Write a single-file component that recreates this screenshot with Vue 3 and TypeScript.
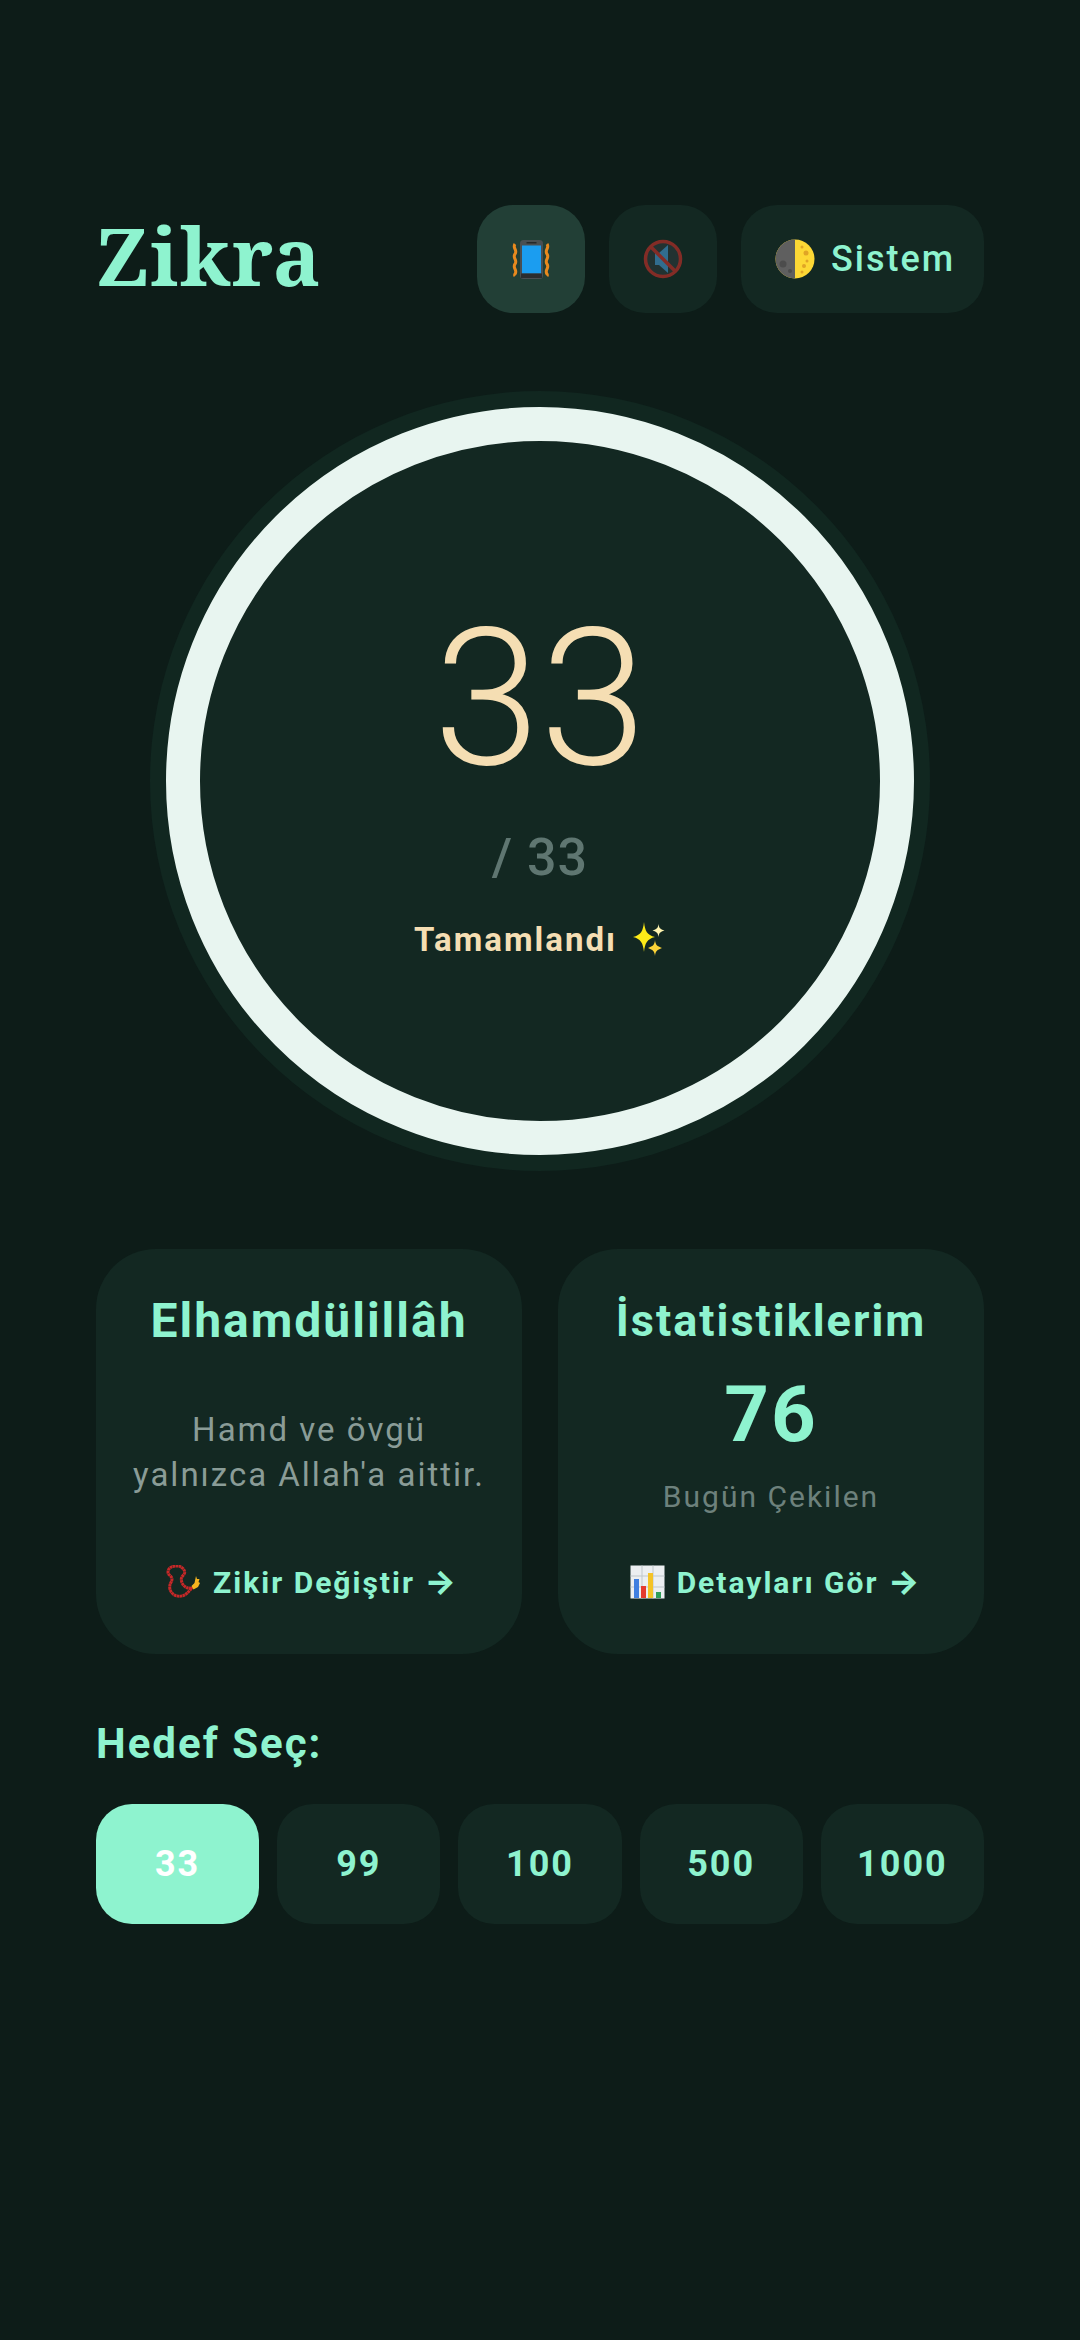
<script setup lang="ts">
const targets: number[] = [33, 99, 100, 500, 1000]
</script>

<template>
  <main class="page">
    <header class="top">
      <h1 class="logo">Zikra</h1>
      <div class="actions">
        <button class="act act-on">
          <svg width="64" height="64" viewBox="0 0 64 64">
            <path d="M16 17c-3 4 3 6 0 10s3 6 0 10 3 6 0 10c-.5 1-.5 1.500 0 2M48 17c3 4-3 6 0 10s-3 6 0 10-3 6 0 10c.5 1 .5 1.500 0 2" fill="none" stroke="#e8891e" stroke-width="3"/>
            <rect x="21" y="13" width="23" height="39" rx="3.500" fill="#4a4f52"/>
            <rect x="23" y="18.500" width="19" height="28" fill="#1b9df0"/>
            <rect x="27.500" y="15" width="10" height="1.500" fill="#25282a"/>
            <rect x="22" y="46.500" width="21" height="4.500" fill="#2b2d2f"/>
          </svg>
        </button>
        <button class="act">
          <svg class="dim" width="64" height="64" viewBox="0 0 64 64">
            <circle cx="32" cy="32" r="17" fill="#2f3b3e"/>
            <path d="M24 26h4l9-8v28l-9-8h-4z" fill="#4aa7e8"/>
            <circle cx="32" cy="32" r="17.500" fill="none" stroke="#e0312b" stroke-width="3.500"/>
            <path d="M20 20l24 24" stroke="#e0312b" stroke-width="3.500"/>
          </svg>
        </button>
        <button class="act act-wide">
          <svg width="40" height="40" viewBox="0 0 40 40">
            <circle cx="20" cy="20" r="19.500" fill="#fdd835"/>
            <path d="M20 .5a19.500 19.500 0 0 0 0 39z" fill="#5f5f5f"/>
            <circle cx="27" cy="8" r="1.500" fill="#e0a526"/>
            <circle cx="31" cy="14" r="2.500" fill="#e0a526"/>
            <circle cx="32" cy="22" r="1.500" fill="#e0a526"/>
            <circle cx="29" cy="27" r="2" fill="#e0a526"/>
            <circle cx="27" cy="33" r="1.500" fill="#e0a526"/>
            <circle cx="8" cy="25" r="3.500" fill="#4c4c4c"/>
            <circle cx="15" cy="32" r="2" fill="#4c4c4c"/>
          </svg>
          <span>Sistem</span>
        </button>
      </div>
    </header>

    <section class="dial">
      <div class="ring">
        <div class="face">
          <div class="count">33</div>
          <div class="goal">/ 33</div>
          <div class="done">
            <span>Tamamlandı</span>
            <svg width="34" height="36" viewBox="0 0 34 36">
              <path d="M12 0c1 9 3 13 11 15-8 2-10 6-11 15-1-9-3-13-11-15 8-2 10-6 11-15z" fill="#fdeb18"/>
              <path d="M26.500 2c.5 4 1.500 5 6 6.500-4.500 1.500-5.500 2.500-6 6.500-.5-4-1.500-5-6-6.500 4.500-1.500 5.500-2.500 6-6.500z" fill="#fff4b0"/>
              <path d="M23 18c.5 5 2 6 7 8-5 2-6.500 3-7 8-.5-5-2-6-7-8 5-2 6.500-3 7-8z" fill="#fbd338"/>
            </svg>
          </div>
        </div>
      </div>
    </section>

    <section class="cards">
      <article class="card">
        <h2>Elhamdülillâh</h2>
        <p class="meaning">Hamd ve övgü<br />yalnızca Allah'a aittir.</p>
        <div class="link link-a">
          <svg width="35" height="34" viewBox="0 0 35 34">
            <path d="M25.300 23.300C22 28 18 31.300 13.700 31.300 8 31.300 3.700 27 3.700 22.300 3.700 18 6 17 6 14 6 11 2 10 2 7.300 2 3 6 .9 10.300.9 15 .9 18.700 4 18.700 7.300 18.700 10 15.300 11 15.300 14 15.300 19 18.700 22.300 22 23z" fill="none" stroke="#c62828" stroke-width="3" stroke-dasharray="2.600 .4"/>
            <path d="M30 11l1 3 2.500 0-1 3 1.500 1-2 4-4.500 2.500-2-3.500 3-3z" fill="#f5b51f"/>
          </svg>
          <span>Zikir Değiştir <span class="arrow">→</span></span>
        </div>
      </article>
      <article class="card">
        <h2 class="h2-small">İstatistiklerim</h2>
        <div class="today">76</div>
        <p class="today-label">Bugün Çekilen</p>
        <div class="link link-b">
          <svg width="35" height="34" viewBox="0 0 35 34">
            <rect x=".5" y=".5" width="34" height="33" fill="#eceff1"/>
            <path d="M.5 11h34M.5 22h34M12 .5v33M23 .5v33" stroke="#bfc7cb" stroke-width="1"/>
            <rect x="4" y="14" width="5" height="19" fill="#3f7fe0"/>
            <rect x="11" y="21" width="5" height="12" fill="#e53a2f"/>
            <rect x="18" y="8" width="5" height="25" fill="#f4c326"/>
            <rect x="26" y="27" width="5" height="6" fill="#2f9e58"/>
          </svg>
          <span>Detayları Gör <span class="arrow">→</span></span>
        </div>
      </article>
    </section>

    <section class="pick">
      <h3>Hedef Seç:</h3>
      <div class="targets">
        <button v-for="(t, i) in targets" :key="t" class="target" :class="{ 'target-on': i === 0 }">{{ t }}</button>
      </div>
    </section>
  </main>
</template>

<style>
html, body { background: #0d1c18; }
</style>

<style scoped>
.page {
  box-sizing: border-box;
  width: 1080px;
  height: 2340px;
  padding: 205px 96px 0;
  background: #0d1c18;
  font-family: Roboto, "Noto Sans", sans-serif;
  color: #8ef3cf;
  overflow: hidden;
}
.top { display: flex; justify-content: space-between; align-items: center; height: 108px; }
.logo { margin: 0 0 8px; font-family: "Noto Serif", "DejaVu Serif Condensed", "DejaVu Serif", serif; font-size: 80px; font-weight: 700; line-height: 108px; letter-spacing: 1px; }
.actions { display: flex; gap: 24px; }
.act {
  display: flex; align-items: center; justify-content: center; gap: 16px;
  width: 108px; height: 108px; padding: 0; border: 0; border-radius: 36px;
  background: #132822; color: inherit; font-family: inherit;
}
.act-on { background: #223f36; }
.act-wide { width: 243px; justify-content: flex-start; padding-left: 34px; font-size: 36px; letter-spacing: 2px; font-weight: 500; }
.dim { opacity: .55; }

.dial { display: flex; justify-content: center; margin-top: 78px; }
.ring {
  box-sizing: border-box; width: 780px; height: 780px; padding: 16px;
  border-radius: 50%; background: #112720;
}
.face {
  box-sizing: border-box; width: 748px; height: 748px; border: 34px solid #e8f5f0;
  border-radius: 50%; background: #132822;
  display: flex; flex-direction: column; align-items: center; padding-top: 162px;
}
.count { font-size: 192px; font-weight: 300; line-height: 192px; color: #f5deb3; }
.goal { margin-top: 31px; font-size: 52px; font-weight: 500; line-height: 64px; letter-spacing: 1px; color: #5f7671; }
.done { display: flex; align-items: center; gap: 15px; margin-top: 26px; font-size: 33px; font-weight: 700; line-height: 48px; letter-spacing: 2px; color: #f5deb3; }

.cards { display: grid; grid-template-columns: 1fr 1fr; gap: 36px; margin-top: 78px; }
.card {
  box-sizing: border-box; height: 405px; border-radius: 60px; background: #132822;
  display: flex; flex-direction: column; align-items: center; padding: 44px 24px 0; text-align: center; position: relative;
}
.card h2 { margin: 0; font-size: 48px; font-weight: 700; line-height: 56px; letter-spacing: 2px; white-space: nowrap; }
.card .h2-small { font-size: 45px; }
.meaning { margin: 58px 0 0; font-size: 33px; line-height: 45px; letter-spacing: 2px; color: #8a9c97; white-space: nowrap; }
.today { margin-top: 24px; font-size: 78px; font-weight: 700; line-height: 84px; letter-spacing: 2px; }
.today-label { margin: 20px 0 0; font-size: 30px; line-height: 40px; letter-spacing: 2px; color: #6d817c; }
.link { position: absolute; left: 0; right: 0; top: 312px; display: flex; justify-content: center; align-items: center; gap: 12px; font-size: 30px; font-weight: 700; line-height: 40px; letter-spacing: 2px; }
.link-a { padding-left: 6px; }
.link-b { padding-left: 9px; }
.arrow { font-family: Inter, "Noto Sans", sans-serif; font-size: 33px; font-weight: 800; }

.pick { margin-top: 65px; }
.pick h3 { margin: 0; font-size: 42px; font-weight: 700; line-height: 50px; letter-spacing: 2px; }
.targets { display: grid; grid-template-columns: repeat(5, 1fr); gap: 18px; margin-top: 35px; }
.target { height: 120px; padding: 0; border: 0; border-radius: 36px; background: #132822; color: inherit; font-family: inherit; font-size: 36px; font-weight: 700; letter-spacing: 2px; }
.target-on { background: #8ef3cf; color: #fff; }
</style>
